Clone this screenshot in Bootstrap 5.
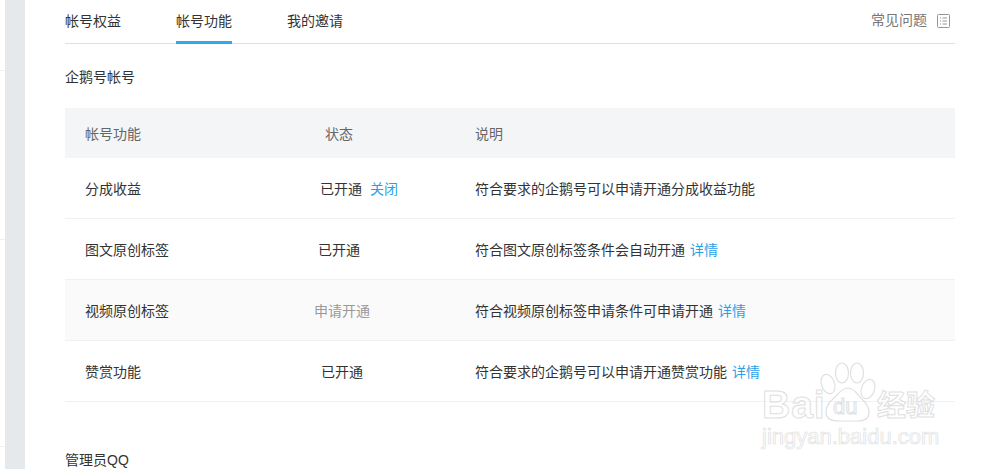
<!DOCTYPE html>
<html lang="zh">
<head>
<meta charset="utf-8">
<title>帐号功能</title>
<link href="https://cdn.jsdelivr.net/npm/bootstrap@5.3.0/dist/css/bootstrap.min.css" rel="stylesheet">
<style>
html,body{height:469px;overflow:hidden}
body{font-family:"Liberation Sans","Noto Sans CJK SC",sans-serif;font-size:14px;color:#333;background:#fff;position:relative}
.shell{height:469px}
.edge{width:5px;flex:none}
.edge-line{height:1px;background:#eef0f2}
.edge-a{margin-top:70px}
.edge-b{margin-top:168px}
.edge-c{margin-top:206px}
.band{width:20px;flex:none;background:#e6e9ec}
.main-area{padding:0 38px 0 40px;min-width:0}
.tabbar{height:44px;border-bottom:1px solid #e0e0e0}
.tabitem{height:44px;line-height:43px;color:#333;text-decoration:none;margin-right:55px}
.tabitem.on{border-bottom:3px solid #2fa9e8}
.faq{color:#777;height:41px;line-height:41px;margin-right:5px}
.faq svg{margin-left:10px}
.sect{line-height:20px;color:#333}
.sect-top{margin-top:23px;margin-bottom:21px}
.sect-next{margin-top:48px}
.feat{table-layout:fixed;margin:0;font-size:14px;--bs-table-bg:transparent;border-collapse:separate;border-spacing:0}
.feat th{background:#f4f5f7;height:50px;font-weight:400;color:#666;vertical-align:middle;border:0;padding:3px 0 0}
.feat td{height:61px;vertical-align:middle;color:#333;border-bottom:1px solid #f0f1f4;padding:3px 0 0}
.feat .pick td{background:#fafafb}
.c-a{width:235px;padding-left:20px!important}
.c-b{width:175px}
.h-b{padding-left:25px!important}
.s-1{padding-left:20px!important}
.s-2{padding-left:18px!important}
.s-3{padding-left:14px!important;color:#999!important}
.s-4{padding-left:21px!important}
.lnk{color:#2d9fe8;text-decoration:none;margin-left:4px}
.lnk-tight{margin-left:1px}
.mark-wm{position:absolute;left:758px;top:360px;pointer-events:none}
.mark-wm text{fill:rgba(255,255,255,.5);stroke:#e0e0e0;stroke-width:1}
.mark-wm .dom{font-size:22px;stroke-width:.7;font-family:"Liberation Sans",sans-serif}
</style>
</head>
<body>
<div class="shell d-flex">
  <div class="edge">
    <div class="edge-line edge-a"></div>
    <div class="edge-line edge-b"></div>
    <div class="edge-line edge-c"></div>
  </div>
  <div class="band"></div>
  <div class="main-area flex-grow-1">
    <div class="tabbar d-flex justify-content-between">
      <div class="d-flex">
        <a class="tabitem" href="#">帐号权益</a>
        <a class="tabitem on" href="#">帐号功能</a>
        <a class="tabitem" href="#">我的邀请</a>
      </div>
      <div class="faq d-flex align-items-center">常见问题
        <svg width="13" height="14" viewBox="0 0 13 14" fill="none" stroke="#9097a3"><rect x=".5" y=".5" width="12" height="13" rx="1"/><path d="M3 4h1M5.500 4H10M3 7h1M5.500 7H10M3 10h1M5.500 10H10"/></svg>
      </div>
    </div>
    <div class="sect sect-top">企鹅号帐号</div>
    <table class="table feat">
      <thead>
        <tr><th class="c-a">帐号功能</th><th class="c-b h-b">状态</th><th>说明</th></tr>
      </thead>
      <tbody>
        <tr><td class="c-a">分成收益</td><td class="s-1">已开通 <a class="lnk" href="#">关闭</a></td><td>符合要求的企鹅号可以申请开通分成收益功能</td></tr>
        <tr><td class="c-a">图文原创标签</td><td class="s-2">已开通</td><td>符合图文原创标签条件会自动开通 <a class="lnk lnk-tight" href="#">详情</a></td></tr>
        <tr class="pick"><td class="c-a">视频原创标签</td><td class="s-3">申请开通</td><td>符合视频原创标签申请条件可申请开通 <a class="lnk lnk-tight" href="#">详情</a></td></tr>
        <tr><td class="c-a">赞赏功能</td><td class="s-4">已开通</td><td>符合要求的企鹅号可以申请开通赞赏功能 <a class="lnk lnk-tight" href="#">详情</a></td></tr>
      </tbody>
    </table>
    <div class="sect sect-next">管理员QQ</div>
  </div>
</div>
<svg class="mark-wm" width="190" height="105" viewBox="0 0 190 105" aria-hidden="true">
  <g fill="none" stroke="#e0e0e0" stroke-width="1.200">
    <ellipse cx="70" cy="24" rx="6.500" ry="10" transform="rotate(-20 70 24)"/>
    <ellipse cx="84" cy="13" rx="6.500" ry="10"/>
    <ellipse cx="99" cy="13" rx="6.500" ry="10"/>
    <ellipse cx="110" cy="29" rx="6.500" ry="10" transform="rotate(20 110 29)"/>
    <path d="M90 28c-7 0-10 7-15 11-5 4-7 9-7 13 0 7 5 9 12 9h20c7 0 11-3 11-9 0-5-3-9-7-13-5-4-7-11-14-11z"/>
  </g>
  <text x="4" y="58" font-family="Liberation Sans,sans-serif" font-size="39" font-weight="700" letter-spacing="1">Bai</text>
  <text x="75" y="54" font-family="Liberation Sans,sans-serif" font-size="22">du</text>
  <text x="119" y="56" font-family="Noto Sans CJK SC,sans-serif" font-size="29" font-weight="700">经验</text>
  <text class="dom" x="4" y="84">jingyan.baidu.com</text>
</svg>
<script src="https://cdn.jsdelivr.net/npm/bootstrap@5.3.0/dist/js/bootstrap.bundle.min.js"></script>
</body>
</html>
